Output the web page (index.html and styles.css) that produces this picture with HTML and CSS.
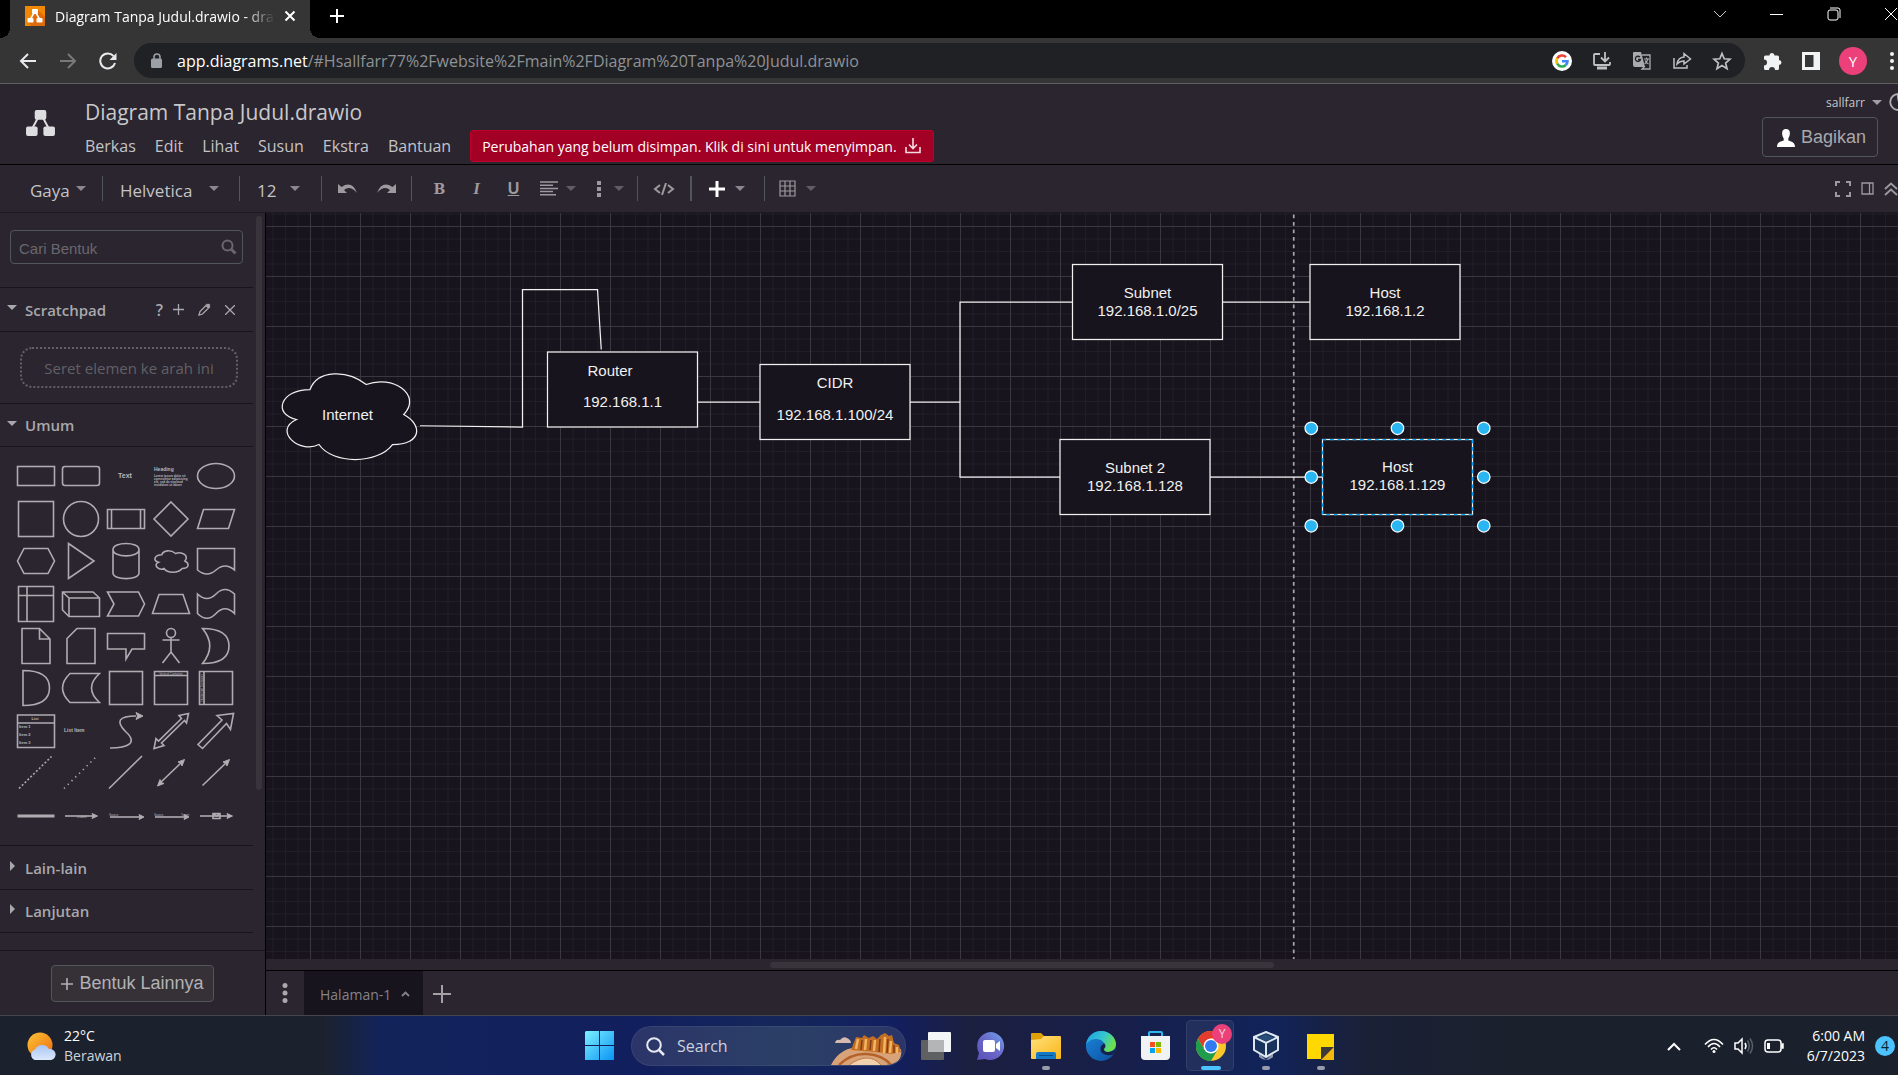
FILE: index.html
```html
<!DOCTYPE html>
<html lang="id">
<head>
<meta charset="utf-8">
<meta name="viewport" content="width=device-width, initial-scale=1">
<title>Diagram Tanpa Judul.drawio - draw.io</title>
<link rel="stylesheet" href="styles.css">
</head>
<body>
<svg class="defs" aria-hidden="true">
  <symbol id="caret" viewBox="0 0 10 5"><path d="M0 0H10L5 5Z" fill="currentColor"/></symbol>
  <symbol id="nodes" viewBox="0 0 30 28"><path d="M13 7L6 20M17 7L24 20" stroke="currentColor" stroke-width="2"/><rect x="9" y="0" width="12" height="10" rx="2" fill="currentColor"/><rect x="0" y="17" width="12" height="10" rx="2" fill="currentColor"/><rect x="18" y="17" width="12" height="10" rx="2" fill="currentColor"/></symbol>
</svg>

<header class="tabstrip">
  <div class="tab">
    <svg class="favicon" width="20" height="20" viewBox="0 0 20 20"><rect width="20" height="20" fill="#f08705"/><path d="M12 3L20 11V20H6L3 16Z" fill="#df6c0c"/><path d="M9 7L5.500 13M11 7L14.500 13" stroke="#fff" stroke-width="1.500"/><rect x="7" y="3" width="6" height="5" rx="1" fill="#fff"/><rect x="2.500" y="12" width="6" height="4.500" rx="1" fill="#fff"/><rect x="11.500" y="12" width="6" height="4.500" rx="1" fill="#fff"/></svg>
    <span class="tab-title">Diagram Tanpa Judul.drawio - draw.io</span>
    <button class="plain" aria-label="Close tab"><svg width="12" height="12" viewBox="0 0 12 12"><path d="M1.500 1.500L10.500 10.500M10.500 1.500L1.500 10.500" stroke="#fff" stroke-width="2"/></svg></button>
  </div>
  <button class="plain new-tab" aria-label="New tab"><svg width="16" height="16" viewBox="0 0 16 16"><path d="M8 1V15M1 8H15" stroke="#fff" stroke-width="2"/></svg></button>
  <div class="window-controls">
    <button class="plain" aria-label="Search tabs"><svg width="14" height="14" viewBox="0 0 14 14" fill="none" stroke="#ccc"><path d="M1 4L7 10L13 4"/></svg></button>
    <button class="plain" aria-label="Minimize"><svg width="14" height="14" viewBox="0 0 14 14"><path d="M0 7.500H13" stroke="#fff"/></svg></button>
    <button class="plain" aria-label="Restore"><svg width="14" height="14" viewBox="0 0 14 14" fill="none" stroke="#fff"><rect x="1" y="3" width="10" height="10" rx="2"/><path d="M3 1H11Q13 1 13 3V11"/></svg></button>
    <button class="plain" aria-label="Close"><svg width="14" height="14" viewBox="0 0 14 14"><path d="M1 1L13 13M13 1L1 13" stroke="#fff"/></svg></button>
  </div>
</header>

<div class="browserbar">
  <div class="nav-buttons">
    <button class="plain" aria-label="Back"><svg width="18" height="18" viewBox="0 0 18 18" fill="none" stroke="#e8eaed" stroke-width="2"><path d="M17 9H2M9 2L2 9L9 16"/></svg></button>
    <button class="plain" aria-label="Forward"><svg width="18" height="18" viewBox="0 0 18 18" fill="none" stroke="#77797b" stroke-width="2"><path d="M1 9H16M9 2L16 9L9 16"/></svg></button>
    <button class="plain" aria-label="Reload"><svg width="18" height="18" viewBox="0 0 18 18" fill="none" stroke="#e8eaed" stroke-width="2"><path d="M16 11A7.500 7.500 0 1 1 14.500 4"/><path d="M17.500 1V8H10.500Z" fill="#e8eaed" stroke="none"/></svg></button>
  </div>
  <div class="omnibox">
    <svg width="12" height="16" viewBox="0 0 12 16"><path d="M3 7V4A3 3 0 0 1 9 4V7" fill="none" stroke="#9aa0a6" stroke-width="1.600"/><rect y="5.500" width="11" height="9.500" rx="1.500" fill="#9aa0a6"/></svg>
    <a class="url" href="#page"><span class="host">app.diagrams.net</span>/#Hsallfarr77%2Fwebsite%2Fmain%2FDiagram%20Tanpa%20Judul.drawio</a>
    <div class="omni-actions">
      <button class="plain" aria-label="Google"><svg width="20" height="20" viewBox="0 0 20 20" fill="none" stroke-width="2.600"><circle cx="10" cy="10" r="10" fill="#fff"/><path d="M14 6.200A5.500 5.500 0 0 0 5.200 7.300" stroke="#ea4335"/><path d="M5.200 7.300A5.500 5.500 0 0 0 5.200 12.700" stroke="#fbbc05"/><path d="M5.200 12.700A5.500 5.500 0 0 0 13.800 14" stroke="#34a853"/><path d="M13.800 14A5.500 5.500 0 0 0 15.500 10.200H10" stroke="#4285f4"/></svg></button>
      <button class="plain" aria-label="Install"><svg width="20" height="20" viewBox="0 0 20 20" fill="none" stroke="#bdc1c6" stroke-width="1.800"><path d="M8 3H3Q2 3 2 4V13Q2 14 3 14H17Q18 14 18 13V11M13 1V10M9 6.500L13 10.500L17 6.500"/><path d="M5 17H15" stroke-width="3"/></svg></button>
      <button class="plain" aria-label="Translate"><svg width="20" height="20" viewBox="0 0 20 20"><path d="M2 1H9L13 16H3Q1 16 1 14V2Q1 1 2 1Z" fill="#a8abb0"/><path d="M10 4H18V18H10L13 15" fill="none" stroke="#a8abb0" stroke-width="1.300"/><path d="M8 6.200A2.600 2.600 0 1 0 8.500 8.500H6" fill="none" stroke="#202124" stroke-width="1.300"/><path d="M12 8H17M14.500 6.500V8M16 8Q14.500 12 12.500 13M13 9.500Q14.500 12 16.500 13" fill="none" stroke="#a8abb0" stroke-width="1.200"/></svg></button>
      <button class="plain" aria-label="Share"><svg width="20" height="20" viewBox="0 0 20 20" fill="none" stroke="#bdc1c6" stroke-width="1.500"><path d="M2 7V17H15V14"/><path d="M5 13Q6 6.500 12 6V2.500L18.500 8L12 13V10Q8 9.800 5 13Z"/></svg></button>
      <button class="plain" aria-label="Bookmark"><svg width="20" height="20" viewBox="0 0 20 20"><path d="M10 2.500L12.200 7.800L18 8.200L13.600 12L15 17.600L10 14.500L5 17.600L6.400 12L2 8.200L7.800 7.800Z" fill="none" stroke="#bdc1c6" stroke-width="1.700"/></svg></button>
    </div>
  </div>
  <div class="ext-actions">
    <button class="plain" aria-label="Extensions"><svg width="20" height="20" viewBox="0 0 20 20"><path d="M6.500 4.500A2.500 2.500 0 0 1 11.500 4.500H14.500Q16 4.500 16 6V9A2.500 2.500 0 0 1 16 14V17.500Q16 19 14.500 19H12A3 3 0 0 0 6 19H2.500Q1 19 1 17.500V14.500A3 3 0 0 0 1 8.500V6Q1 4.500 2.500 4.500Z" fill="#f1f3f4"/></svg></button>
    <button class="plain" aria-label="Side panel"><svg width="18" height="18" viewBox="0 0 18 18"><path fill-rule="evenodd" d="M0 0H18V18H0ZM3 3V15H11.500V3Z" fill="#f1f3f4"/></svg></button>
    <button class="avatar">Y</button>
    <button class="plain more" aria-label="Menu"><svg width="4" height="18" viewBox="0 0 4 18" fill="#f1f3f4"><circle cx="2" cy="2" r="2"/><circle cx="2" cy="9" r="2"/><circle cx="2" cy="16" r="2"/></svg></button>
  </div>
</div>

<div class="app-header">
  <svg class="logo" width="29" height="27" viewBox="0 0 30 28"><use href="#nodes"/></svg>
  <div class="title-block">
    <h1>Diagram Tanpa Judul.drawio</h1>
    <nav class="menu">
      <a href="#berkas">Berkas</a><a href="#edit">Edit</a><a href="#lihat">Lihat</a><a href="#susun">Susun</a><a href="#ekstra">Ekstra</a><a href="#bantuan">Bantuan</a>
      <button class="save-banner">Perubahan yang belum disimpan. Klik di sini untuk menyimpan.
        <svg width="16" height="16" viewBox="0 0 16 16" fill="none" stroke="#f3dbe0" stroke-width="1.600"><path d="M1 9V14.500H15V9M8 0V10.500M4 6.500L8 10.500L12 6.500"/></svg></button>
    </nav>
  </div>
  <div class="account">
    <div class="user">
      <a href="#user">sallfarr</a>
      <svg width="10" height="5"><use href="#caret"/></svg>
      <svg width="18" height="18" viewBox="0 0 18 18"><path d="M9 1A8 8 0 1 0 17 11Q8 13 9 1Z" fill="none" stroke="#b0aeb3" stroke-width="1.800"/></svg>
    </div>
    <button class="share"><svg width="18" height="18" viewBox="0 0 18 18"><path d="M9 0C14 0 13.500 6 11.300 9.500V11.500C14 12.500 18 13 18 18H0C0 13 4 12.500 6.700 11.500V9.500C4.500 6 4 0 9 0Z" fill="#fff"/></svg>Bagikan</button>
  </div>
</div>

<div class="format-bar">
  <div class="group gaya"><button class="plain">Gaya</button><svg width="10" height="5"><use href="#caret"/></svg></div>
  <div class="group font"><select aria-label="Font"><option>Helvetica</option></select><svg width="10" height="5"><use href="#caret"/></svg></div>
  <div class="group size"><select aria-label="Ukuran font"><option>12</option></select><svg width="10" height="5"><use href="#caret"/></svg></div>
  <div class="group history">
    <button class="plain" aria-label="Undo"><svg width="20" height="12" viewBox="0 0 20 12"><path d="M0 1V10H9L6 7Q12 2 19 10Q14 -3 3.500 4Z" fill="currentColor"/></svg></button>
    <button class="plain" aria-label="Redo"><svg width="20" height="12" viewBox="0 0 20 12"><path d="M20 1V10H11L14 7Q8 2 1 10Q6 -3 16.500 4Z" fill="currentColor"/></svg></button>
  </div>
  <div class="group text-style">
    <button class="plain letter bold">B</button>
    <button class="plain letter italic">I</button>
    <button class="plain letter underline">U</button>
    <div class="pair"><button class="plain" aria-label="Perataan"><svg width="18" height="15" viewBox="0 0 18 15" stroke="currentColor" stroke-width="1.500"><path d="M0 1H18M0 4.200H13M0 7.400H18M0 10.600H13M0 13.800H16"/></svg></button><svg class="dim" width="10" height="5"><use href="#caret"/></svg></div>
    <div class="pair narrow"><button class="plain" aria-label="Lainnya"><svg width="4" height="16" viewBox="0 0 4 16" fill="currentColor"><path d="M0 0H4V4H0ZM0 6H4V10H0ZM0 12H4V16H0Z"/></svg></button><svg class="dim" width="10" height="5"><use href="#caret"/></svg></div>
  </div>
  <div class="group html"><button class="plain" aria-label="HTML"><svg width="22" height="12" viewBox="0 0 22 12" fill="none" stroke="currentColor" stroke-width="2"><path d="M7 2L2 6L7 10M15 2L20 6L15 10M13 0L9 12"/></svg></button></div>
  <div class="group insert"><button class="plain" aria-label="Sisipkan"><svg width="16" height="16" viewBox="0 0 16 16"><path d="M8 0V16M0 8H16" stroke="#fff" stroke-width="3"/></svg></button><svg width="10" height="5"><use href="#caret"/></svg></div>
  <div class="group table"><button class="plain" aria-label="Tabel"><svg width="17" height="17" viewBox="0 0 17 17" fill="none" stroke="currentColor" stroke-width="1.200"><path d="M1 1H16V16H1ZM6 1V16M11 1V16M1 6H16M1 11H16"/></svg></button><svg class="dim" width="10" height="5"><use href="#caret"/></svg></div>
  <div class="view-actions">
    <button class="plain" aria-label="Layar penuh"><svg width="16" height="16" viewBox="0 0 16 16" fill="none" stroke="currentColor" stroke-width="2"><path d="M1 5V1H5M11 1H15V5M15 11V15H11M5 15H1V11"/></svg></button>
    <button class="plain" aria-label="Panel format"><svg width="13" height="13" viewBox="0 0 13 13" fill="none" stroke="currentColor" stroke-width="1.300"><path d="M1 1H12V12H1ZM8.500 1V12"/></svg></button>
    <button class="plain" aria-label="Ciutkan"><svg width="14" height="14" viewBox="0 0 14 14" fill="none" stroke="currentColor" stroke-width="1.800"><path d="M1 7L7 1.500L13 7M1 13L7 7.500L13 13"/></svg></button>
  </div>
</div>

<main class="workspace" id="page">
  <aside class="sidebar">
    <div class="palette-scroll">
      <div class="search-wrap"><input type="text" placeholder="Cari Bentuk" aria-label="Cari Bentuk"><svg width="16" height="16" viewBox="0 0 16 16" fill="none" stroke="#69666d"><circle cx="6.500" cy="6.500" r="5" stroke-width="2"/><path d="M10 10L14.500 14.500" stroke-width="3"/></svg></div>
      <div class="section-head"><svg class="tri" width="10" height="5"><use href="#caret"/></svg><h2>Scratchpad</h2>
        <div class="head-actions">
          <button class="plain help">?</button>
          <button class="plain" aria-label="Tambah"><svg width="11" height="11" viewBox="0 0 11 11"><path d="M5.500 0V11M0 5.500H11" stroke="currentColor" stroke-width="1.300"/></svg></button>
          <button class="plain edit" aria-label="Edit"><svg width="13" height="13" viewBox="0 0 13 13" fill="none" stroke="currentColor" stroke-width="1.300"><path d="M1 12L2 8.500L9 1.500L11.500 4L4.500 11ZM8 2.500L10.500 5"/><path d="M10 1.500L11.500 3" stroke-width="2.500"/></svg></button>
          <button class="plain" aria-label="Tutup"><svg width="10" height="10" viewBox="0 0 10 10"><path d="M0 0L10 10M10 0L0 10" stroke="currentColor" stroke-width="1.300"/></svg></button>
        </div></div>
      <div class="scratch"><div class="dropzone">Seret elemen ke arah ini</div></div>
      <div class="section-head short"><svg class="tri" width="10" height="5"><use href="#caret"/></svg><h2>Umum</h2></div>
      <div class="shapes">
        <button><svg viewBox="-20 -20 40 40"><rect x="-18.500" y="-9.500" width="37" height="19"/></svg></button>
        <button><svg viewBox="-20 -20 40 40"><rect x="-18.500" y="-9.500" width="37" height="19" rx="2.500"/></svg></button>
        <button><svg viewBox="-20 -20 40 40"><text x="-1" y="2" font-size="7" font-weight="bold" text-anchor="middle">Text</text></svg></button>
        <button><svg viewBox="-20 -20 40 40"><text x="-17" y="-5" font-size="5" font-weight="bold">Heading</text><g font-size="3" font-weight="bold"><text x="-17" y="1">Lorem ipsum dolor sit</text><text x="-17" y="4">consectetur adipisicing</text><text x="-17" y="7">elit, sed do eiusmod</text><text x="-17" y="10">incididunt ut labore</text></g></svg></button>
        <button><svg viewBox="-20 -20 40 40"><ellipse rx="18.500" ry="12.500"/></svg></button>

        <button><svg viewBox="-20 -20 40 40"><rect x="-17.500" y="-17.500" width="35" height="35"/></svg></button>
        <button><svg viewBox="-20 -20 40 40"><circle r="17.500"/></svg></button>
        <button><svg viewBox="-20 -20 40 40"><path d="M-18.500 -9.500H18.500V9.500H-18.500ZM-14.500 -9.500V9.500M14.500 -9.500V9.500"/></svg></button>
        <button><svg viewBox="-20 -20 40 40"><path d="M0 -17L17 0L0 17L-17 0Z"/></svg></button>
        <button><svg viewBox="-20 -20 40 40"><path d="M-18.500 9.500L-12.500 -9.500H18.500L12.500 9.500Z"/></svg></button>

        <button><svg viewBox="-20 -20 40 40"><path d="M-18.500 0L-12 -12.500H12L18.500 0L12 12.500H-12Z"/></svg></button>
        <button><svg viewBox="-20 -20 40 40"><path d="M-12.500 -17.500L13 0L-12.500 17.500Z"/></svg></button>
        <button><svg viewBox="-20 -20 40 40"><path d="M-13 -11.500C-13 -19.500 13 -19.500 13 -11.500V12C13 19.500 -13 19.500 -13 12ZM-13 -11.500C-13 -3 13 -3 13 -11.500"/></svg></button>
        <button><svg viewBox="-20 -20 40 40"><path d="M-9.250 -6.250C-16.650 -6.250 -18.500 0 -12.600 1.250C-18.500 4 -11.800 10 -7 7.500C-3.700 12.500 7.400 12.500 11.100 7.500C18.500 7.500 18.500 2.500 13.900 0C18.500 -5 11.100 -10 4.600 -7.500C0 -11.250 -7.400 -11.250 -9.250 -6.250Z"/></svg></button>
        <button><svg viewBox="-20 -20 40 40"><path d="M-18.500 -12.500H18.500V9Q9 1 0 9T-18.500 9Z"/></svg></button>

        <button><svg viewBox="-20 -20 40 40"><path d="M-17.500 -17.500H17.500V17.500H-17.500ZM-9 -17.500V17.500M-17.500 -8.500H17.500"/></svg></button>
        <button><svg viewBox="-20 -20 40 40"><path d="M-18.500 -12H12L18.500 -6V12.500H-12L-18.500 6ZM-18.500 -12L-12 -6H18.500M-12 -6V12.500"/></svg></button>
        <button><svg viewBox="-20 -20 40 40"><path d="M-18.500 -12H12.500L18.500 0L12.500 12H-18.500L-12 0Z"/></svg></button>
        <button><svg viewBox="-20 -20 40 40"><path d="M-12 -9.500H12L18.500 9.500H-18.500Z"/></svg></button>
        <button><svg viewBox="-20 -20 40 40"><path d="M-18.500 -10Q-9 -1 0 -10T18.500 -10V9.500Q9 0 0 9.500T-18.500 9.500Z"/></svg></button>

        <button><svg viewBox="-20 -20 40 40"><path d="M-14 -17.500H3.500L14 -7V17.500H-14ZM3.500 -17.500V-7H14"/></svg></button>
        <button><svg viewBox="-20 -20 40 40"><path d="M-4 -17.500H14V17.500H-14V-7.500Z"/></svg></button>
        <button><svg viewBox="-20 -20 40 40"><path d="M-18.500 -12.500H18.500V3H6L0 13V3H-18.500Z"/></svg></button>
        <button><svg viewBox="-20 -20 40 40"><circle cy="-13" r="4.500"/><path d="M0 -8.500V6M-8.500 -6H8.500M-8.500 17L0 6L8.500 17"/></svg></button>
        <button><svg viewBox="-20 -20 40 40"><path d="M-13.500 -17.500Q13 -17.500 13 0T-13.500 17.500Q1 0 -13.500 -17.500Z"/></svg></button>

        <button><svg viewBox="-20 -20 40 40"><path d="M-13 -17.500Q13.500 -17.500 13.500 0T-13 17.500Z"/></svg></button>
        <button><svg viewBox="-20 -20 40 40"><path d="M-11 -14.500H18.500Q2.500 0 18.500 14.500H-11Q-26 0 -11 -14.500Z"/></svg></button>
        <button><svg viewBox="-20 -20 40 40"><rect x="-16.500" y="-16.500" width="33" height="33"/></svg></button>
        <button><svg viewBox="-20 -20 40 40"><path d="M-16.500 -16.500H16.500V16.500H-16.500ZM-16.500 -12.500H16.500"/><text x="0" y="-13" font-size="3" text-anchor="middle">Vertical Container</text></svg></button>
        <button><svg viewBox="-20 -20 40 40"><path d="M-16.500 -16.500H16.500V16.500H-16.500ZM-12 -16.500V16.500"/><text transform="rotate(-90)" x="0" y="-13" font-size="3" text-anchor="middle">Horizontal Container</text></svg></button>

        <button><svg viewBox="-20 -20 40 40"><path d="M-18.500 -16H18.500V16.500H-18.500ZM-18.500 -8H18.500"/><g font-size="4" font-weight="bold"><text x="-1" y="-11" text-anchor="middle">List</text><text x="-17" y="-3">Item 1</text><text x="-17" y="5">Item 2</text><text x="-17" y="13">Item 3</text></g></svg></button>
        <button><svg viewBox="-20 -20 40 40"><text x="-17" y="1" font-size="5" font-weight="bold">List Item</text></svg></button>
        <button><svg viewBox="-20 -20 40 40"><path d="M-16 17C2 17 12 12 0 1C-11 -10 -7 -15 10 -15"/><path class="solid" d="M17 -15L10 -18.500L11.500 -15L10 -11.500Z"/></svg></button>
        <button><svg viewBox="-20 -20 40 40"><path d="M17.500 -17.500L15.500 -8L13.500 -10.500L-9.500 12L-7 14.500L-17 17.500L-15 7.500L-12.500 10L10.500 -12.500L8 -15.500Z"/></svg></button>
        <button><svg viewBox="-20 -20 40 40"><path d="M17.500 -17.500L14.500 -1.500L10.500 -7.500L-13.500 17.500L-18 13.500L6 -11L1 -15.500Z"/></svg></button>

        <button><svg viewBox="-20 -20 40 40"><path d="M-17 15.500L15.500 -16.500" stroke-dasharray="2 2"/></svg></button>
        <button><svg viewBox="-20 -20 40 40"><path d="M-17 15.500L15.500 -16.500" stroke-dasharray="1.300 4"/></svg></button>
        <button><svg viewBox="-20 -20 40 40"><path d="M-17 15.500L16 -17"/></svg></button>
        <button><svg viewBox="-20 -20 40 40"><path d="M-11 10L11 -11"/><path class="solid" d="M13.500 -13.500L11 -7L10 -10L7 -11ZM-13.500 13L-11 6.500L-10 9.500L-7 10.500Z"/></svg></button>
        <button><svg viewBox="-20 -20 40 40"><path d="M-13.500 12.500L11 -11"/><path class="solid" d="M13.500 -13.500L11 -7L10 -10L7 -11Z"/></svg></button>

        <button><svg viewBox="-20 -20 40 40"><path d="M-18.500 0H18.500" stroke-width="3"/></svg></button>
        <button><svg viewBox="-20 -20 40 40"><path d="M-16 0H14"/><path class="solid" d="M16.500 0L11 -2.500L12 0L11 2.500Z"/><text x="-4" y="2" font-size="4">Label</text></svg></button>
        <button><svg viewBox="-20 -20 40 40"><path d="M-16 1H16"/><path class="solid" d="M18 1L13 -1.500L14 1L13 3.500Z"/><text x="-17" y="0" font-size="3">Source</text></svg></button>
        <button><svg viewBox="-20 -20 40 40"><path d="M-16 1H16"/><path class="solid" d="M18 1L13 -1.500L14 1L13 3.500Z"/><text x="-17" y="0" font-size="3">Source</text><text x="10" y="0" font-size="3">Target</text></svg></button>
        <button><svg viewBox="-20 -20 40 40"><path d="M-16 0H14"/><path class="solid" d="M16.500 0L11 -2.500L12 0L11 2.500Z"/><path d="M-3 -2.500H4V2.500H-3ZM-3 -2.500L0.500 0L4 -2.500"/></svg></button>
      </div>
      <div class="section-head closed"><svg class="tri" width="5" height="10" viewBox="0 0 5 10"><path d="M0 0L5 5L0 10Z" fill="currentColor"/></svg><h2>Lain-lain</h2></div>
      <div class="section-head closed short"><svg class="tri" width="5" height="10" viewBox="0 0 5 10"><path d="M0 0L5 5L0 10Z" fill="currentColor"/></svg><h2>Lanjutan</h2></div>
    </div>
    <div class="palette-thumb"></div>
    <div class="more-shapes"><button><svg width="12" height="12" viewBox="0 0 12 12"><path d="M6 0V12M0 6H12" stroke="currentColor" stroke-width="1.600"/></svg>Bentuk Lainnya</button></div>
  </aside>

  <section class="editor">
    <svg class="canvas" role="img" aria-label="Diagram jaringan">
      <defs>
        <pattern id="grid" x="44" y="13" width="50" height="50" patternUnits="userSpaceOnUse">
          <path d="M13 0V50M25.500 0V50M38 0V50M0 13H50M0 25.500H50M0 38H50" stroke="#211e27"/>
          <path d="M.5 0V50M0 .5H50" stroke="#3a373e"/>
        </pattern>
      </defs>
      <rect width="100%" height="100%" fill="url(#grid)"/>
      <g transform="translate(44 14) scale(1.250)">
        <path class="page-edge" d="M787 -10V640"/>
        <path class="edge" d="M88 159L170 160V50H230L233 98M310 140H360M480 140H520M610 60H520V200H600M730 60H800M720 200H810"/>
        <path class="node" d="M0 130C-24 130 -30 150 -10.800 154C-30 162.800 -8.400 182 7.200 174C18 190 54 190 66 174C90 174 90 158 75 150C90 134 66 118 45 126C30 114 6 114 0 130Z"/>
        <rect class="node" x="190" y="100" width="120" height="60"/>
        <rect class="node" x="360" y="110" width="120" height="60"/>
        <rect class="node" x="610" y="30" width="120" height="60"/>
        <rect class="node" x="800" y="30" width="120" height="60"/>
        <rect class="node" x="600" y="170" width="120" height="60"/>
        <rect class="node" x="810" y="170" width="120" height="60"/>
        <rect class="selection" x="810" y="170" width="120" height="60"/>
        <g class="labels">
          <text x="30" y="154">Internet</text>
          <text x="240" y="119">Router</text><text x="250" y="144">192.168.1.1</text>
          <text x="420" y="129">CIDR</text><text x="420" y="154">192.168.1.100/24</text>
          <text x="670" y="57">Subnet</text><text x="670" y="71">192.168.1.0/25</text>
          <text x="860" y="57">Host</text><text x="860" y="71">192.168.1.2</text>
          <text x="660" y="197">Subnet 2</text><text x="660" y="211">192.168.1.128</text>
          <text x="870" y="196">Host</text><text x="870" y="210">192.168.1.129</text>
        </g>
        <g class="handles">
          <circle cx="801" cy="161" r="5"/><circle cx="870" cy="161" r="5"/><circle cx="939" cy="161" r="5"/>
          <circle cx="801" cy="200" r="5"/><circle cx="939" cy="200" r="5"/>
          <circle cx="801" cy="239" r="5"/><circle cx="870" cy="239" r="5"/><circle cx="939" cy="239" r="5"/>
        </g>
      </g>
    </svg>
    <div class="hscroll"><div class="hthumb"></div></div>
    <footer class="pages">
      <button class="plain page-menu" aria-label="Halaman"><svg width="6" height="20" viewBox="0 0 6 20" fill="#aaa8ad"><circle cx="3" cy="2.500" r="2.500"/><circle cx="3" cy="10" r="2.500"/><circle cx="3" cy="17.500" r="2.500"/></svg></button>
      <button class="page-tab">Halaman-1<svg width="9" height="6" viewBox="0 0 9 6"><path d="M1 5L4.500 1.500L8 5" fill="none" stroke="currentColor" stroke-width="1.800"/></svg></button>
      <button class="plain add-page" aria-label="Tambah halaman"><svg width="18" height="18" viewBox="0 0 18 18"><path d="M9 0V18M0 9H18" stroke="#a3a1a6" stroke-width="2"/></svg></button>
    </footer>
  </section>
</main>

<footer class="taskbar">
  <div class="weather">
    <svg width="29" height="29" viewBox="0 0 29 29"><defs><linearGradient id="sun" x2="1" y2="1"><stop stop-color="#fbc536"/><stop offset="1" stop-color="#ee6a10"/></linearGradient><linearGradient id="cl" x2="0" y2="1"><stop stop-color="#a8c4f5"/><stop offset="1" stop-color="#dce8fb"/></linearGradient></defs><circle cx="13" cy="13" r="12.500" fill="url(#sun)"/><path d="M8 28A5.500 5.500 0 0 1 8 17.500A8 8 0 0 1 22 17A5.500 5.500 0 0 1 24 28Z" fill="url(#cl)"/></svg>
    <div><span class="temp">22°C</span><span class="cond">Berawan</span></div>
  </div>
  <div class="dock">
    <button class="plain" aria-label="Start"><svg width="30" height="30" viewBox="0 0 30 30"><defs><linearGradient id="win" x2="1" y2="1"><stop stop-color="#7df0ff"/><stop offset="1" stop-color="#0a94f5"/></linearGradient></defs><path d="M1 0H14V14H0V1ZM15 0H29V14H15ZM0 15H14V29H0ZM15 15H29V29H15Z" fill="url(#win)"/></svg></button>
    <label class="search-pill">
      <svg width="19" height="19" viewBox="0 0 19 19" fill="none" stroke="#e6e9f2" stroke-width="2"><circle cx="8" cy="8" r="6.800"/><path d="M13 13L18 18" stroke-width="2.500"/></svg>
      <input type="text" placeholder="Search" aria-label="Search">
      <svg class="pill-art" width="72" height="32" viewBox="0 0 72 32"><path d="M4 10Q5 6 9 7Q12 3 16 5Q20 7 20 10Z" fill="#d6b9b0"/><path d="M0 32Q10 11 38 14L70 16Q72 24 64 32Z" fill="#d9a37a"/><path d="M8 32Q20 20 36 21T60 32" fill="none" stroke="#b5622a" stroke-width="2.500"/><path d="M18 32Q28 25 36 25T50 32" fill="#f1d2ae" stroke="#c27b44"/><path d="M20 17L25 4L31 5L33 2L38 5L42 3L46 6L50 2L54 0L58 3L61 2L63 10L68 12L70 19L60 21L44 19Z" fill="#c56f25"/><path d="M25 16L27 6M34 17L35 6M43 18L44 7M53 20L54 4M59 20L60 8M66 20V14" stroke="#f2b562" stroke-width="2.500"/><path d="M30 17L31 7M39 17L40 7M48 19L49 6M56 20L57 6M63 20V12" stroke="#7d3d17" stroke-width="1.500"/></svg>
    </label>
    <button class="plain" aria-label="Task view"><svg width="30" height="28" viewBox="0 0 30 28"><rect x="7" width="23" height="20" rx="1" fill="#f4f5f7"/><rect y="8" width="23" height="20" rx="1" fill="#5f6062"/><path d="M7 8H23V20H7Z" fill="#b4b5b6"/></svg></button>
    <button class="plain" aria-label="Chat"><svg width="30" height="30" viewBox="0 0 30 30"><defs><linearGradient id="chat" x1="1" x2="0" y2="1"><stop stop-color="#6ea3ec"/><stop offset=".5" stop-color="#6a68c8"/><stop offset="1" stop-color="#5a4fb8"/></linearGradient></defs><path d="M15 1A14 14 0 1 1 9 28L1 29L3 22A14 14 0 0 1 15 1Z" fill="url(#chat)"/><rect x="7" y="9" width="12" height="12" rx="2" fill="#fff"/><path d="M20 13L24 10V20L20 17Z" fill="#fff"/></svg></button>
    <button class="plain running" aria-label="File Explorer"><svg width="30" height="28" viewBox="0 0 30 28"><defs><linearGradient id="fold" x2="1" y2="1"><stop stop-color="#ffe17c"/><stop offset="1" stop-color="#f9b618"/></linearGradient></defs><path d="M0 2Q0 1 1 1H10L13 4V8H0Z" fill="#e0a008"/><path d="M0 8L10 7L13 4H29Q30 4 30 5V26Q30 27 29 27H1Q0 27 0 26Z" fill="url(#fold)"/><path d="M5 27V22Q5 20 7 20H23Q25 20 25 22V27Z" fill="#1279c7"/><path d="M8 23.500H22" stroke="#0a4f8c"/></svg></button>
    <button class="plain" aria-label="Edge"><svg width="30" height="30" viewBox="0 0 30 30"><defs><linearGradient id="e1" x2="1" y2=".4"><stop stop-color="#1c9fe8"/><stop offset=".6" stop-color="#35c5d0"/><stop offset="1" stop-color="#6be04f"/></linearGradient><linearGradient id="e2" x2="1" y2="1"><stop stop-color="#1b86dc"/><stop offset="1" stop-color="#0d4f9e"/></linearGradient></defs><circle cx="15" cy="15" r="15" fill="url(#e2)"/><path d="M0 14C1 5 8 0 15 0C24 0 30 7 30 13C30 19 25 21 21 21C17 21 17 19 18 17C20 12 16 8 10 8C5 8 1 11 0 14Z" fill="url(#e1)"/><path d="M18 12Q21 15 18 18Q18 21 22 21Q27 21 30 17L28 23Q22 26 16 22Q12 17 18 12Z" fill="#17224a"/></svg></button>
    <button class="plain" aria-label="Microsoft Store"><svg width="30" height="30" viewBox="0 0 30 30"><path d="M8 7V2Q8 1 9 1H20Q21 1 21 2V7" fill="none" stroke="#2db5f0" stroke-width="2"/><path d="M0 5H29V25Q29 29 25 29H4Q0 29 0 25Z" fill="#f1f2f3"/><rect x="9" y="11" width="5" height="5" fill="#f25022"/><rect x="15" y="11" width="5" height="5" fill="#7fba00"/><rect x="9" y="17" width="5" height="5" fill="#00a4ef"/><rect x="15" y="17" width="5" height="5" fill="#ffb900"/></svg></button>
    <button class="plain active" aria-label="Chrome"><svg width="30" height="30" viewBox="0 0 30 30"><circle cx="15" cy="15" r="15" fill="#fcc62b"/><path d="M15 7.500H28A15 15 0 0 0 2 7.500L8.500 18.800Z" fill="#e33b2e"/><path d="M2 7.500A15 15 0 0 0 15 30L21.500 18.800L15 20L8.500 18.800Z" fill="#1f9d4c"/><circle cx="15" cy="15" r="7.500" fill="#fff"/><circle cx="15" cy="15" r="6" fill="#2f7bf2"/></svg><span class="profile-badge">Y</span></button>
    <button class="plain running" aria-label="VirtualBox"><svg width="26" height="30" viewBox="0 0 26 30"><path d="M6 22L13 29L20 22V26Q13 32 6 26Z" fill="#8a97ab"/><path d="M13 1L25 6V19L13 26L1 19V6Z" fill="#17335c" stroke="#dfe7f0" stroke-width="2"/><path d="M1 6L13 12L25 6M13 12V26" fill="none" stroke="#dfe7f0" stroke-width="2"/><path d="M5 7L13 3L21 7L13 10Z" fill="#274d78"/></svg></button>
    <button class="plain running" aria-label="Sticky Notes"><svg width="27" height="27" viewBox="0 0 27 27"><path d="M0 1H27V14L14 26H0Z" fill="#ffd800"/><path d="M14 14H27L14 27Z" fill="#3b3a38"/><path d="M27 14V27H14Z" fill="#f3b80c"/></svg></button>
  </div>
  <div class="tray">
    <button class="plain" aria-label="Show hidden icons"><svg width="14" height="9" viewBox="0 0 14 9"><path d="M1 8L7 2L13 8" fill="none" stroke="#fff" stroke-width="2"/></svg></button>
    <div class="status">
      <svg width="20" height="16" viewBox="0 0 20 16" fill="none" stroke="#fff" stroke-width="1.600"><path d="M1 6.500Q10 -3.500 19 6.500M4 9Q10 2 16 9M7 11.500Q10 8 13 11.500"/><circle cx="10" cy="13.500" r="1.500" fill="#fff" stroke="none"/></svg>
      <svg width="20" height="18" viewBox="0 0 20 18" fill="none" stroke="#fff" stroke-width="1.500"><path d="M1 6H4L8 2V16L4 12H1Z"/><path d="M11 6Q13 9 11 12"/><path d="M13.500 3.500Q17 9 13.500 14.500M16 1.500Q21 9 16 16.500" stroke="#5c6066"/></svg>
      <svg width="20" height="14" viewBox="0 0 20 14" fill="none" stroke="#fff" stroke-width="1.500"><rect x="1" y="1" width="16" height="12" rx="3"/><path d="M18 5H19V9H18Z" fill="#fff"/><path d="M4.500 4V10" stroke-width="3"/></svg>
    </div>
    <div class="clock"><span>6:00 AM</span><span>6/7/2023</span></div>
    <span class="count">4</span>
  </div>
</footer>
</body>
</html>
```
FILE: styles.css
```css
:root {
  --ui: "Open Sans", "Noto Sans", sans-serif;
  --sans: "Liberation Sans", Arial, sans-serif;
  --panel: #2a252f;
  --paper: #18141d;
}
* { box-sizing: border-box; }
body {
  margin: 0;
  min-height: 100vh;
  display: flex;
  flex-direction: column;
  overflow: hidden;
  background: var(--panel);
  color: #c9c8cb;
  font-family: var(--ui);
  font-size: 16px;
}
a { color: inherit; text-decoration: none; }
h1, h2 { margin: 0; }
svg { flex: none; display: block; }
.defs { position: absolute; width: 0; height: 0; }
.plain {
  border: 0;
  padding: 0;
  background: none;
  color: inherit;
  font: inherit;
  display: flex;
  align-items: center;
  justify-content: center;
  flex: none;
}

/* Browser tabs */
.tabstrip { display: flex; height: 38px; background: #000; padding-left: 10px; }
.tab {
  position: relative;
  width: 300px;
  display: flex;
  align-items: center;
  padding: 0 14px 6px 15px;
  background: #353535;
  color: #fff;
}
.tab::before, .tab::after {
  content: "";
  position: absolute;
  bottom: 0;
  width: 10px;
  height: 10px;
}
.tab::before { right: 100%; background: radial-gradient(circle at 0 0, transparent 10px, #353535 10px); }
.tab::after { left: 100%; background: radial-gradient(circle at 100% 0, transparent 10px, #353535 10px); }
.tab-title {
  flex: 1;
  margin: 0 9px 0 10px;
  font-size: 14px;
  white-space: nowrap;
  overflow: hidden;
  mask-image: linear-gradient(to right, #000 86%, transparent);
}
.new-tab { margin-left: 19px; padding-bottom: 6px; }
.window-controls { margin-left: auto; display: flex; gap: 43px; padding-bottom: 11px; }

/* Address bar */
.browserbar {
  display: flex;
  align-items: center;
  height: 46px;
  background: #353535;
  border-bottom: 1px solid #5f5f5f;
}
.nav-buttons { display: flex; gap: 22px; padding: 0 17px 0 19px; }
.omnibox {
  flex: 1;
  height: 35px;
  display: flex;
  align-items: center;
  gap: 14px;
  padding: 0 13px 0 17px;
  border-radius: 18px;
  background: #202124;
}
.url { flex: 1; min-width: 0; overflow: hidden; white-space: nowrap; color: #8f9296; font-size: 16px; }
.host { color: #fff; }
.omni-actions { display: flex; gap: 20px; }
.ext-actions { display: flex; align-items: center; gap: 19px; margin-left: 18px; padding-right: 4px; }
.more { margin-left: 4px; }
.avatar {
  width: 28px;
  height: 28px;
  padding: 0;
  border: 0;
  border-radius: 50%;
  background: #ec407a;
  color: #fff;
  font: 15px var(--ui);
}

/* Application header */
.app-header { display: flex; height: 81px; border-bottom: 1px solid #000; overflow: hidden; }
.logo { margin: 26px 30px 0 26px; color: #dedde0; }
.title-block { flex: 1; padding-top: 13px; }
h1 { font-size: 21px; font-weight: 400; line-height: 30px; }
.menu { display: flex; align-items: center; gap: 19px; height: 38px; font-size: 16px; color: #c4c3c6; }
.save-banner {
  display: flex;
  align-items: center;
  gap: 8px;
  height: 32px;
  padding: 0 12px 0 11px;
  border: 1px solid #c00028;
  border-radius: 3px;
  background: #a20025;
  color: #fff;
  font: 14px var(--ui);
  white-space: nowrap;
}
.account { width: 136px; padding-top: 8px; }
.user { display: flex; align-items: center; gap: 7px; height: 20px; padding-left: 64px; font-size: 12px; white-space: nowrap; }
.user svg { color: #a09ea3; }
.share {
  display: flex;
  align-items: center;
  gap: 6px;
  height: 40px;
  width: 116px;
  margin-top: 5px;
  padding: 1px 0 0 14px;
  border: 1px solid #505759;
  border-radius: 4px;
  background: none;
  color: #a9a8ac;
  font: 18px var(--sans);
}

/* Formatting toolbar */
.format-bar {
  display: flex;
  align-items: center;
  height: 48px;
  padding-left: 30px;
  border-bottom: 1px solid #1d1922;
  color: #9c9a9f;
  overflow: hidden;
}
.group { display: flex; align-items: center; height: 25px; border-right: 1px solid #505759; }
.group > svg { color: #8a888d; }
.format-bar .dim { color: #605d64; }
.gaya { width: 73px; gap: 6px; font-size: 17px; color: #c4c3c6; }
.gaya button { padding-top: 4px; }
.group select {
  appearance: none;
  border: 0;
  padding: 4px 0 0;
  background: none;
  color: #c4c3c6;
  font: 17px var(--ui);
}
.font { width: 137px; padding-left: 17px; }
.font select { width: 89px; }
.size { width: 82px; padding-left: 17px; }
.size select { width: 33px; }
.history { width: 90px; padding-left: 16px; gap: 18px; }
.text-style { width: 226px; padding-left: 17px; }
.letter { width: 37px; padding-right: 16px; font: bold 16px var(--sans); }
.bold { font: bold 14px "DejaVu Serif", serif; }
.italic { font: italic bold 17px "Liberation Serif", serif; }
.underline { text-decoration: underline; }
.pair { display: flex; align-items: center; gap: 8px; margin-right: 21px; }
.pair.narrow { gap: 13px; margin: 0; }
.html { width: 54px; justify-content: center; border-right-width: 2px; }
.insert { width: 73px; padding-left: 17px; gap: 10px; }
.table { padding-left: 14px; gap: 10px; border: 0; }
.view-actions { display: flex; align-items: center; gap: 10px; margin-left: auto; }

/* Workspace */
.workspace { flex: 1; display: flex; min-height: 0; height: 0; }
.sidebar {
  position: relative;
  flex: none;
  width: 266px;
  display: flex;
  flex-direction: column;
  border-right: 1px solid #000;
}
.palette-scroll { flex: 1; min-height: 0; overflow: hidden; margin-right: 12px; }
.palette-thumb { position: absolute; top: 3px; right: 3px; width: 6px; height: 574px; border-radius: 3px; background: #38343b; }
.search-wrap { position: relative; height: 75px; padding: 17px 10px 0; border-bottom: 1px solid #18141d; }
.search-wrap input {
  width: 233px;
  height: 34px;
  padding: 2px 8px 0;
  border: 1px solid #505759;
  border-radius: 4px;
  background: none;
  font: 15px var(--sans);
  color: #c9c8cb;
}
.search-wrap input::placeholder { color: #6a676e; opacity: 1; }
.search-wrap svg { position: absolute; left: 221px; top: 26px; }
.section-head {
  display: flex;
  align-items: center;
  height: 44px;
  padding: 0 18px 0 7px;
  border-bottom: 1px solid #18141d;
  color: #a9a8ac;
}
.section-head.short { height: 43px; }
.section-head h2 { font-size: 15px; font-weight: 600; margin-left: 8px; }
.tri { margin-bottom: 4px; }
.closed .tri { margin: 0 2px 4px 3px; }
.head-actions { display: flex; align-items: center; gap: 10px; margin-left: auto; }
.edit { margin: 0 4px; }
.help { font-weight: 600; }
.scratch { height: 72px; padding: 15px 15px 0 20px; border-bottom: 1px solid #18141d; }
.dropzone {
  height: 41px;
  border: 2px dotted #625f66;
  border-radius: 12px;
  text-align: center;
  line-height: 38px;
  color: #626066;
  font-size: 15px;
}
.shapes {
  display: grid;
  grid-template-columns: repeat(5, 45px);
  grid-template-rows: repeat(9, 1fr);
  height: 399px;
  padding: 8px 0 8px 13px;
  border-bottom: 1px solid #18141d;
}
.shapes button { display: flex; align-items: center; justify-content: center; min-height: 0; padding: 0; border: 0; background: none; }
.shapes svg { width: 40px; height: 40px; fill: none; stroke: #aeacb1; stroke-width: 1.6; }
.shapes text { fill: #b9b7bc; stroke: none; font-family: var(--sans); }
.shapes .solid { fill: #b3b1b6; stroke-width: 1; }
.more-shapes { flex: none; height: 65px; padding: 14px 0 0 51px; border-top: 1px solid #18141d; }
.more-shapes button {
  display: flex;
  align-items: center;
  justify-content: center;
  gap: 6px;
  width: 163px;
  height: 37px;
  padding: 0;
  border: 1px solid #505759;
  border-radius: 4px;
  background: #353137;
  color: #b3b1b5;
  font: 18px var(--sans);
}

.editor { flex: 1; min-width: 0; display: flex; flex-direction: column; }
.canvas { flex: 1; width: 100%; min-height: 0; background: var(--paper); }
.page-edge { fill: none; stroke: #a5a3a8; stroke-width: 1.4; stroke-dasharray: 3 3; }
.edge { fill: none; stroke: #f0f0f0; stroke-width: 1; }
.node { fill: var(--paper); stroke: #f0f0f0; stroke-width: 1; }
.selection { fill: none; stroke: #00a8ff; stroke-width: 1; stroke-dasharray: 3 3; }
.labels { fill: #f0f0f0; font-family: var(--sans); font-size: 12px; text-anchor: middle; }
.handles { fill: #29b6f2; stroke: #fff; stroke-width: 1; }
.hscroll { height: 11px; padding: 3px 0 0 504px; flex: none; }
.hthumb { width: 504px; height: 6px; border-radius: 3px; background: #38343b; }
.pages { flex: none; display: flex; height: 45px; border-top: 1px solid #000; }
.page-menu { width: 38px; }
.page-tab {
  display: flex;
  align-items: center;
  gap: 10px;
  width: 119px;
  padding: 2px 0 0 16px;
  border: 0;
  background: var(--paper);
  color: #858388;
  font: 14px var(--ui);
}
.add-page { width: 38px; padding-top: 1px; }

/* Taskbar */
.taskbar {
  flex: none;
  height: 60px;
  display: grid;
  grid-template-columns: 1fr auto 1fr;
  border-top: 1px solid #45464c;
  background: linear-gradient(to right, #1c222d 0, #1c222d 17%, #12235a 20%, #121f5e 34%, #14275a 41%, #121f60 47%, #1b1f40 51%, #181f48 58%, #11235a 67%, #1a2036 72%, #1a212c 80%);
  color: #fff;
}
.weather { display: flex; align-items: center; gap: 8px; padding-left: 27px; font-size: 14px; line-height: 20px; }
.weather span { display: block; }
.cond { color: #d0d3d8; }
.dock { display: flex; align-items: center; margin-left: 22px; }
.dock > button { position: relative; width: 55px; height: 60px; }
.search-pill {
  display: flex;
  align-items: center;
  gap: 12px;
  width: 275px;
  height: 40px;
  margin: 0 2px 0 4px;
  padding-left: 14px;
  border-radius: 20px;
  border: 1px solid #ffffff10;
  background: linear-gradient(to right, #2c3569, #2b4066 60%, #2b3568);
  overflow: hidden;
}
.search-pill input { flex: 1; min-width: 0; border: 0; padding: 0; background: none; color: #fff; font: 16px var(--ui); }
.search-pill input::placeholder { color: #ccd1de; opacity: 1; }
.pill-art { align-self: flex-end; margin-right: 2px; }
.running::after {
  content: "";
  position: absolute;
  bottom: 6px;
  left: 24px;
  width: 8px;
  height: 4px;
  border-radius: 2px;
  background: #989bab;
}
.active::before {
  content: "";
  position: absolute;
  inset: 4px 4px 5px 3px;
  border: 1px solid #ffffff14;
  border-radius: 5px;
  background: #ffffff10;
}
.active::after {
  content: "";
  position: absolute;
  bottom: 6px;
  left: 18px;
  width: 20px;
  height: 4px;
  border-radius: 2px;
  background: #4cc2ff;
}
.active svg { position: relative; }
.profile-badge {
  position: absolute;
  left: 29px;
  top: 8px;
  width: 20px;
  height: 20px;
  border-radius: 50%;
  background: #ec407a;
  color: #f5d8e1;
  font-size: 12px;
  line-height: 20px;
}
.tray { display: flex; align-items: center; justify-content: flex-end; padding-right: 3px; }
.status { display: flex; align-items: center; gap: 10px; margin: 0 23px 0 23px; }
.clock { text-align: right; font-size: 14px; line-height: 20px; }
.clock span { display: block; }
.count {
  width: 20px;
  height: 20px;
  margin-left: 10px;
  border-radius: 50%;
  background: #4cc2ff;
  color: #0b2233;
  font-size: 14px;
  line-height: 20px;
  text-align: center;
}
```
